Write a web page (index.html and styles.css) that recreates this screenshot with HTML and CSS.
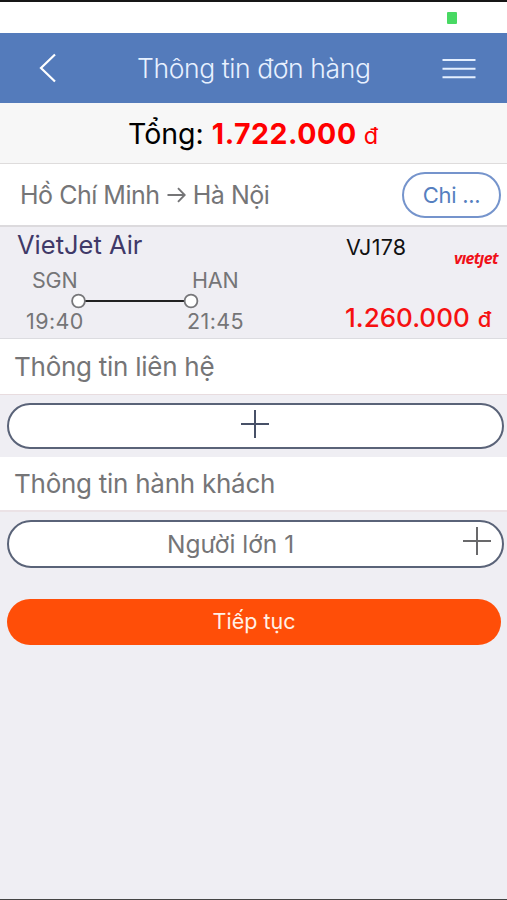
FILE: index.html
```html
<!DOCTYPE html>
<html lang="vi">
<head>
<meta charset="utf-8">
<title>Thông tin đơn hàng</title>
<link rel="stylesheet" href="styles.css">
</head>
<body>
<div class="screen">
  <div class="status"><span class="battery"></span></div>
  <header class="navbar">
    <svg class="back" width="18" height="30" viewBox="0 0 18 30"><path d="M16 1.500L2 15L16 28.500"/></svg>
    <h1 class="title">Thông tin đơn hàng</h1>
    <svg class="menu" width="34" height="22" viewBox="0 0 34 22"><path d="M0.500 2H33.500M0.500 10.700H33.500M0.500 19.300H33.500"/></svg>
  </header>
  <div class="total"><span class="total-label">Tổng:</span><b class="total-value">1.722.000</b><span class="total-unit">đ</span></div>
  <div class="route">
    <span class="route-name">Hồ Chí Minh <svg class="arrow" width="19" height="16" viewBox="0 0 19 16"><path d="M0.500 8H17.500M11 1.200L17.700 8L11 14.800"/></svg> Hà Nội</span>
    <button class="detail">Chi ...</button>
  </div>
  <section class="flight">
    <div class="flight-left">
      <div class="airline">VietJet Air</div>
      <div class="airports"><span>SGN</span><span>HAN</span></div>
      <svg class="track" width="130" height="16" viewBox="0 0 130 16"><path d="M14 8H114"/><circle cx="7.500" cy="8" r="6.400"/><circle cx="120" cy="8" r="6.400"/></svg>
      <div class="times"><span>19:40</span><span>21:45</span></div>
    </div>
    <div class="flight-right">
      <div class="flight-head"><span class="code">VJ178</span><span class="logo">vıetȷet</span></div>
      <div class="price"><span class="price-value">1.260.000</span><span class="price-unit">đ</span></div>
    </div>
  </section>
  <h2 class="section contact">Thông tin liên hệ</h2>
  <div class="pill contact-add"><svg class="plus" width="28" height="28" viewBox="0 0 28 28"><path d="M0 14H28M14 0V28"/></svg></div>
  <h2 class="section passengers">Thông tin hành khách</h2>
  <div class="pill passenger"><span class="passenger-name">Người lớn 1</span><svg class="plus" width="28" height="28" viewBox="0 0 28 28"><path d="M0 14H28M14 0V28"/></svg></div>
  <button class="next">Tiếp tục</button>
</div>
</body>
</html>
```
FILE: styles.css
```css
* { box-sizing: border-box; }
body { margin: 0; font-family: Inter, "Liberation Sans", sans-serif; color: #757577; }
button { font-family: inherit; }
svg { display: block; fill: none; flex: none; }
.screen { display: flex; flex-direction: column; width: 507px; height: 900px; overflow: hidden; background: #efeef3; border-top: 2px solid #161616; border-bottom: 1px solid #444; white-space: nowrap; }
.status { flex: none; height: 31px; background: #fff; display: flex; justify-content: flex-end; padding: 10px 50px 0 0; }
.battery { width: 10px; height: 12px; background: #48d963; border-radius: 1px; }
.navbar { flex: none; height: 70px; background: #547bbb; display: flex; align-items: center; padding: 0 31px 0 39px; }
.back { stroke: #fff; stroke-width: 2.2; }
.title { margin: 0; padding-left: 80px; width: 346px; font-weight: 300; font-size: 26.500px; letter-spacing: -0.400px; line-height: 70px; color: #e8f1ff; }
.menu { margin-left: auto; margin-top: 2px; stroke: #e4efff; stroke-width: 2; }
.total { flex: none; height: 61px; background: #f7f7f7; border-bottom: 1px solid #dedcdc; padding-left: 128px; display: flex; align-items: baseline; line-height: 61px; color: #000; font-size: 28.500px; }
.total-value { color: #f00; margin-left: 8px; letter-spacing: 0.550px; }
.total-unit { color: #f00; margin-left: 7px; font-size: 23.500px; }
.route { flex: none; height: 63px; background: #fff; border-bottom: 2px solid #dcdadd; display: flex; align-items: center; padding: 0 6px 0 20px; }
.route-name { font-size: 25px; letter-spacing: -0.480px; line-height: 60px; }
.arrow { display: inline-block; stroke: #757577; stroke-width: 1.900; vertical-align: 1px; margin-left: 1px; }
.detail { margin-left: auto; width: 99px; height: 46px; border: 2px solid #7594cc; border-radius: 23px; background: #fff; color: #567fc0; font-size: 22px; letter-spacing: -0.300px; padding: 0; }
.flight { flex: none; height: 112px; display: flex; border-bottom: 1px solid #dcdce0; }
.flight-left { width: 346px; }
.airline { padding-left: 17px; font-size: 25.500px; line-height: 36px; color: #3f3968; }
.airports, .times { display: flex; font-size: 21.500px; }
.airports { padding-left: 32px; line-height: 34px; height: 30px; letter-spacing: -0.200px; }
.airports span:first-child { flex: none; width: 160px; }
.track { margin-left: 71px; stroke: #77777a; stroke-width: 1.800; }
.track path { stroke: #222; stroke-width: 2; }
.track circle { fill: #fff; }
.times { padding-left: 26px; line-height: 24px; letter-spacing: 0.400px; }
.times span:first-child { flex: none; width: 161px; }
.flight-right { flex: 1; }
.flight-head { display: flex; align-items: flex-start; height: 72px; }
.code { width: 108px; font-size: 21.500px; letter-spacing: 0.300px; line-height: 40px; color: #111; }
.logo { padding-top: 21px; line-height: 20px; font-family: "Open Sans", sans-serif; font-size: 16px; font-weight: 700; font-style: italic; color: #f01018; letter-spacing: -0.700px; }
.price { display: flex; align-items: baseline; line-height: 37px; color: #f61111; font-weight: 500; margin-left: -1px; }
.price-value { font-size: 26px; }
.price-unit { font-size: 22px; margin-left: 8px; }
.section { flex: none; margin: 0; background: #fff; padding-left: 14px; font-size: 26px; letter-spacing: -0.260px; font-weight: 400; border-bottom: 1px solid #e8dcdf; }
.contact { height: 56px; line-height: 56px; }
.passengers { height: 55px; line-height: 53px; border-bottom: 2px solid #ebe2e6; }
.pill { flex: none; margin: 0 3px 0 7px; background: #fff; border: 2px solid #5a6378; border-radius: 24px; display: flex; }
.plus { stroke: #475067; stroke-width: 2; }
.contact-add { height: 46px; margin-top: 8px; margin-bottom: 8px; justify-content: center; padding: 5px 1px 0 0; }
.passenger { height: 48px; margin-top: 8px; padding: 5px 11px 0 158px; justify-content: space-between; }
.passenger .plus { stroke: #69696b; }
.passenger-name { font-size: 24.500px; line-height: 35px; }
.next { flex: none; height: 46px; margin: 31px 6px 0 7px; padding: 0 0 2px; border: 0; border-radius: 23px; background: #ff4e08; color: #fff0e6; font-size: 21.500px; }
```
